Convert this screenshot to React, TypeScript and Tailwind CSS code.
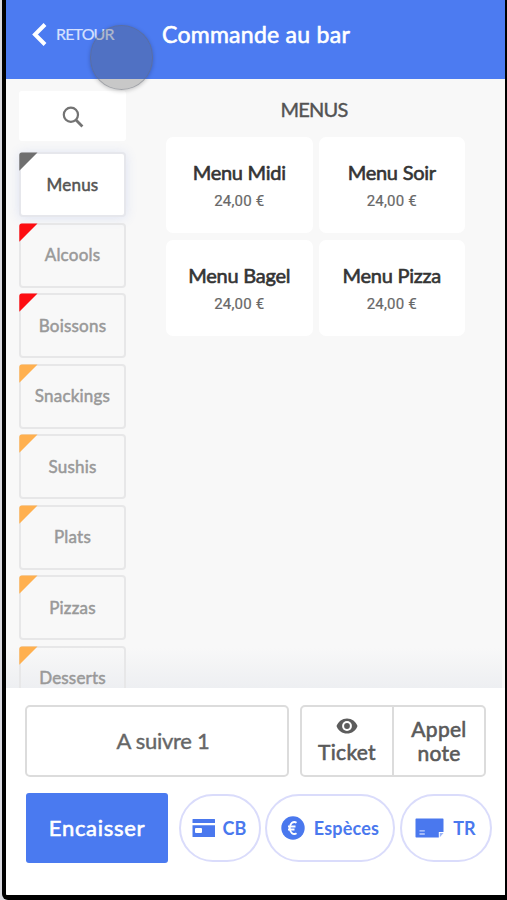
import React from 'react';

interface Category {
  name: string;
  corner: string;
  active?: boolean;
}

interface Product {
  name: string;
  price: number;
}

const categories: Category[] = [
  { name: 'Menus', corner: 'text-[#6f6f6f]', active: true },
  { name: 'Alcools', corner: 'text-[#fd0d12]' },
  { name: 'Boissons', corner: 'text-[#fd0d12]' },
  { name: 'Snackings', corner: 'text-[#ffb04f]' },
  { name: 'Sushis', corner: 'text-[#ffb04f]' },
  { name: 'Plats', corner: 'text-[#ffb04f]' },
  { name: 'Pizzas', corner: 'text-[#ffb04f]' },
  { name: 'Desserts', corner: 'text-[#ffb04f]' },
];

const products: Product[] = [
  { name: 'Menu Midi', price: 24 },
  { name: 'Menu Soir', price: 24 },
  { name: 'Menu Bagel', price: 24 },
  { name: 'Menu Pizza', price: 24 },
];

const formatPrice = (amount: number) => `${amount.toFixed(2).replace('.', ',')} €`;

const SearchIcon = () => (
  <svg className="h-[22px] w-[22px]" viewBox="0 0 22 22" fill="none" stroke="#737373">
    <circle cx="8.9" cy="8.8" r="7.1" strokeWidth="2.2" />
    <path d="M14 14l6.4 6.4" strokeWidth="2.8" />
  </svg>
);

const EyeIcon = () => (
  <svg className="h-4 w-[22px]" viewBox="0 0 22 16">
    <path d="M11 .4C6.200.4 2.200 3.400.5 8c1.700 4.600 5.700 7.600 10.500 7.600S19.800 12.600 21.500 8C19.800 3.400 15.800.4 11 .4z" fill="#5c5c5c" />
    <circle cx="11" cy="8" r="4.9" fill="#fff" />
    <circle cx="11" cy="8" r="2.900" fill="#5c5c5c" />
  </svg>
);

const CardIcon = () => (
  <svg className="h-[19px] w-6" viewBox="0 0 24 19" fill="#4a78ee">
    <path d="M1 0h21.500a.5.5 0 0 1 .5.5V4H.5V.5A.5.5 0 0 1 1 0z" />
    <path fillRule="evenodd" d="M.5 6.300H23V17.500a.5.5 0 0 1-.5.5H1a.5.5 0 0 1-.5-.5zM4 9a1 1 0 0 0-1 1v3a1 1 0 0 0 1 1h5a1 1 0 0 0 1-1v-3a1 1 0 0 0-1-1z" />
  </svg>
);

const EuroIcon = () => (
  <svg className="h-6 w-6" viewBox="0 0 24 24">
    <circle cx="12" cy="12" r="11.700" fill="#4a78ee" />
    <path d="M15.500 6.700A4.600 6 0 1 0 15.500 17.300M7 10.500h7.500M7 13.500h6.500" fill="none" stroke="#fff" strokeWidth="1.900" />
  </svg>
);

const TicketIcon = () => (
  <svg className="h-5 w-[29px]" viewBox="0 0 29 20">
    <path d="M1.200.5h26.600a.7.7 0 0 1 .7.7V14h-4.700v5.500H1.200a.7.7 0 0 1-.7-.7V1.200a.7.7 0 0 1 .7-.7z" fill="#4a78ee" />
    <path d="M24.800 19.300V15h3.700z" fill="#9db5f8" />
    <path d="M4.500 12.800h5.300M4.500 16h5.300" stroke="#c3d1fb" strokeWidth="1.300" />
  </svg>
);

const CategoryButton: React.FC<{ category: Category }> = ({ category }) => (
  <button
    className={`relative h-[65px] w-full shrink-0 rounded-[4px] border-2 text-[17px] tracking-[0.2px] [-webkit-text-stroke:0.5px] ${
      category.active
        ? 'border-[#e6e7ec] bg-white text-[#545454] shadow-[0_1px_12px_rgba(90,120,220,0.16)]'
        : 'border-[#e7e7e8] bg-transparent text-[#999999]'
    }`}
  >
    <svg className={`absolute -top-0.5 -left-0.5 h-5 w-5 ${category.corner}`} viewBox="0 0 20 20" fill="currentColor">
      <path d="M.3 3A2.500 2.500 0 0 1 2.800.5H18.500L.3 18.700z" />
    </svg>
    {category.name}
  </button>
);

const ProductCard: React.FC<{ product: Product }> = ({ product }) => (
  <button className="flex h-24 flex-col items-center rounded-[7px] bg-white pt-[21px]">
    <span className="text-[20px] leading-[28px] tracking-[-0.25px] text-[#343434] [-webkit-text-stroke:0.6px]">{product.name}</span>
    <span className="mt-1 font-['Roboto'] text-[15px] leading-[22px] tracking-[0.2px] text-[#686868] [-webkit-text-stroke:0.2px]">{formatPrice(product.price)}</span>
  </button>
);

const App: React.FC = () => {
  return (
    <div className="h-[900px] w-[507px] overflow-hidden bg-[#d9d9df] pl-0.5 font-['Lato',sans-serif]">
      <div className="h-full overflow-hidden rounded-bl-[6px] border-r-2 border-b-[5px] border-l-4 border-black bg-white">
        <div className="flex h-full flex-col">
          <header className="relative z-10 flex h-[79px] shrink-0 bg-[#4c7bf1] text-white">
            <button className="flex h-[68px] w-[156px] items-center pl-[26px]">
              <svg className="h-[23px] w-[15px]" viewBox="0 0 15 23" fill="none" stroke="#fff" strokeWidth="4">
                <path d="M13 1.500L3 11.500l10 10" />
              </svg>
              <span className="ml-[9px] text-[16px] tracking-[-0.85px] text-[#d6e1ff] [-webkit-text-stroke:0.2px]">RETOUR</span>
            </button>
            <h1 className="h-[68px] text-[23px] leading-[68px] tracking-[0.27px] whitespace-nowrap [-webkit-text-stroke:0.6px]">Commande au bar</h1>
            {/* touch indicator */}
            <div className="absolute top-[25px] left-[84px] h-[65px] w-[63px] rounded-full border border-[#666b78]/40 bg-[#585858]/30 shadow-[0_1px_4px_rgba(0,0,0,0.22)]" />
          </header>

          <main className="relative flex min-h-0 flex-1 overflow-hidden bg-[#f8f8f8]">
            <div className="pointer-events-none absolute right-[3px] bottom-0 left-0 h-10 bg-linear-to-b from-[#e9ebef]/0 to-[#e9ebef]/70" />
            <aside className="relative flex w-[120px] shrink-0 flex-col pt-3 pl-[13px]">
              <button className="mb-[11px] flex h-[50px] shrink-0 items-center justify-center rounded-[3px] bg-white pt-0.5">
                <SearchIcon />
              </button>
              <div className="flex flex-col gap-[5.500px]">
                {categories.map((category) => (
                  <CategoryButton key={category.name} category={category} />
                ))}
              </div>
            </aside>
            <section className="ml-10 w-[299px]">
              <h2 className="pt-4 pr-[3px] pb-3.5 text-center text-[20px] leading-[28px] tracking-[-0.8px] text-[#535353] [-webkit-text-stroke:0.4px]">MENUS</h2>
              <div className="grid grid-cols-2 gap-x-1.5 gap-y-[7px]">
                {products.map((product) => (
                  <ProductCard key={product.name} product={product} />
                ))}
              </div>
            </section>
          </main>

          <footer className="h-[207px] shrink-0 bg-white pt-[17px] pl-[19px]">
            <div className="flex gap-[11px]">
              <button className="h-[72px] w-[264px] rounded-[5px] border-2 border-[#dcdcdc] pb-0.5 pl-3 text-[22px] tracking-[-0.3px] text-[#666666] [-webkit-text-stroke:0.4px]">
                A suivre 1
              </button>
              <div className="flex h-[72px] w-[186px] rounded-[5px] border-2 border-[#dcdcdc] text-[21px] leading-6 tracking-[0.3px] text-[#5a5a5a] [-webkit-text-stroke:0.6px]">
                <button className="flex w-[92px] flex-col items-center border-r-2 border-[#dcdcdc] pt-[11px]">
                  <EyeIcon />
                  <span className="mt-1.5">Ticket</span>
                </button>
                <button className="flex-1">
                  Appel
                  <br />
                  note
                </button>
              </div>
            </div>
            <div className="mt-4 flex items-center text-[18px] font-bold text-[#4a78ee]">
              <button className="mr-[11px] ml-px h-[70px] w-[142px] rounded-[3px] bg-[#4a7af0] pb-0.5 text-[22px] font-normal tracking-[0.7px] text-white [-webkit-text-stroke:0.6px]">
                Encaisser
              </button>
              <button className="flex h-[68px] w-[82px] items-center justify-center gap-[7px] rounded-full border-2 border-[#dadcfb] pr-0.5">
                <CardIcon />
                CB
              </button>
              <button className="ml-1 flex h-[68px] w-[130px] items-center justify-center gap-[9px] rounded-full border-2 border-[#dadcfb]">
                <EuroIcon />
                <span className="tracking-[0.2px]">Espèces</span>
              </button>
              <button className="ml-[5px] flex h-[68px] w-[92px] items-center justify-center gap-[9px] rounded-full border-2 border-[#dadcfb] pr-px">
                <TicketIcon />
                TR
              </button>
            </div>
          </footer>
        </div>
      </div>
    </div>
  );
};

export default App;
